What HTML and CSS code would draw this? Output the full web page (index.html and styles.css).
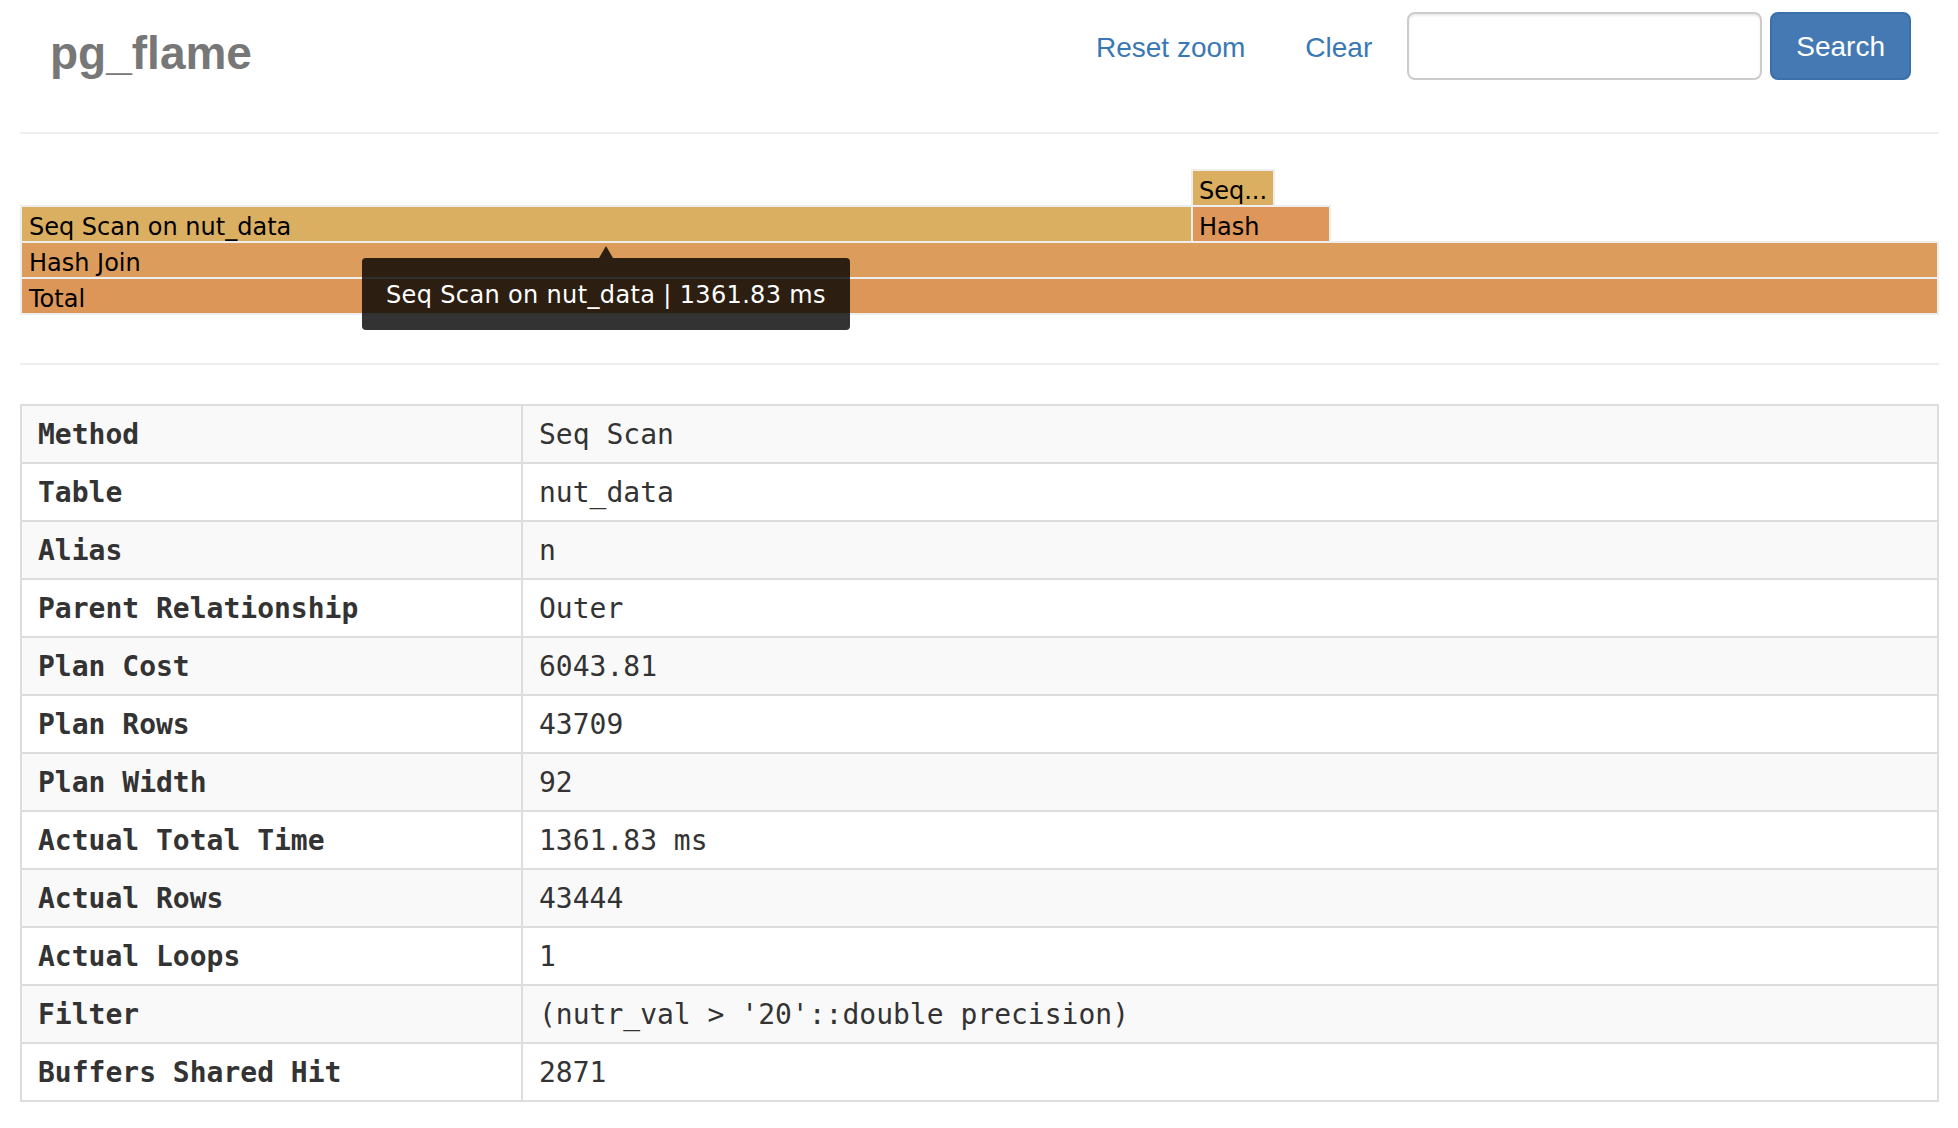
FILE: index.html
```html
<!DOCTYPE html>
<html lang="en">
<head>
<meta charset="utf-8">
<title>pg_flame</title>
<link rel="stylesheet" href="styles.css">
</head>
<body>
<div class="container">
  <header class="header">
    <div class="brand">pg_flame</div>
    <nav class="nav">
      <a class="nav-link" href="#">Reset zoom</a>
      <a class="nav-link" href="#">Clear</a>
      <form class="search">
        <input class="search-input" type="text">
        <button class="btn" type="button">Search</button>
      </form>
    </nav>
  </header>

  <section class="flame">
    <svg class="flame-svg" width="1919" height="146" viewBox="0 0 1919 146">
      <g class="frame">
        <rect x="1172" y="1" width="82" height="36" fill="#dbaf62"/>
        <text x="1179" y="30">Seq...</text>
      </g>
      <g class="frame">
        <rect x="1" y="37" width="1171" height="36" fill="#dbaf62"/>
        <text x="9" y="66">Seq Scan on nut_data</text>
      </g>
      <g class="frame">
        <rect x="1172" y="37" width="138" height="36" fill="#de965a"/>
        <text x="1179" y="66">Hash</text>
      </g>
      <g class="frame">
        <rect x="1" y="73" width="1917" height="36" fill="#dc9d5c"/>
        <text x="9" y="102">Hash Join</text>
      </g>
      <g class="frame">
        <rect x="1" y="109" width="1917" height="36" fill="#dc9658"/>
        <text x="9" y="138">Total</text>
      </g>
    </svg>
    <div class="tooltip">Seq Scan on nut_data | 1361.83 ms</div>
  </section>

  <table class="details">
    <colgroup><col class="col-key"><col></colgroup>
    <tbody>
      <tr><th>Method</th><td>Seq Scan</td></tr>
      <tr><th>Table</th><td>nut_data</td></tr>
      <tr><th>Alias</th><td>n</td></tr>
      <tr><th>Parent Relationship</th><td>Outer</td></tr>
      <tr><th>Plan Cost</th><td>6043.81</td></tr>
      <tr><th>Plan Rows</th><td>43709</td></tr>
      <tr><th>Plan Width</th><td>92</td></tr>
      <tr><th>Actual Total Time</th><td>1361.83 ms</td></tr>
      <tr><th>Actual Rows</th><td>43444</td></tr>
      <tr><th>Actual Loops</th><td>1</td></tr>
      <tr><th>Filter</th><td>(nutr_val &gt; '20'::double precision)</td></tr>
      <tr><th>Buffers Shared Hit</th><td>2871</td></tr>
    </tbody>
  </table>
</div>
</body>
</html>
```

FILE: styles.css
```css
* { box-sizing: border-box; }

html, body {
  margin: 0;
  padding: 0;
  background: #fff;
}

body {
  font-family: "Liberation Sans", Arial, Helvetica, sans-serif;
  font-size: 28px;
  color: #333;
}

.container {
  padding: 0 19px 0 20px;
}

.header {
  display: flex;
  justify-content: space-between;
  align-items: flex-start;
  height: 134px;
  border-bottom: 2px solid #eeeeee;
}

.brand {
  margin-top: 30px;
  padding-left: 30px;
  font-size: 46px;
  line-height: 46px;
  font-weight: bold;
  letter-spacing: 0;
  color: #777;
}

.nav {
  display: flex;
  align-items: center;
  padding-top: 12px;
  padding-right: 28px;
}

.nav-link {
  display: block;
  padding: 3px 30px 0;
  line-height: 40px;
  color: #3a78b5;
  text-decoration: none;
}

.search {
  display: flex;
  gap: 8px;
  margin: 0 0 0 5px;
}

.search-input {
  width: 355px;
  height: 68px;
  border: 2px solid #cccccc;
  border-radius: 8px;
  background: #fff;
  font: inherit;
  padding: 12px 24px;
  box-shadow: inset 0 2px 2px rgba(0,0,0,0.075);
}

.btn {
  height: 68px;
  padding: 2px 24px 0;
  border: 2px solid #3a6fa8;
  border-radius: 8px;
  background: #4479b4;
  color: #fff;
  font: inherit;
  line-height: 40px;
}

.flame {
  position: relative;
  margin-top: 35px;
  height: 196px;
  border-bottom: 2px solid #eeeeee;
}

.flame-svg {
  display: block;
}

.frame rect {
  stroke: #eeeeee;
  stroke-width: 2;
}

.frame text {
  font-family: "DejaVu Sans", Verdana, sans-serif;
  font-size: 24px;
  fill: #000;
}

.tooltip {
  position: absolute;
  left: 342px;
  top: 89px;
  width: 488px;
  padding: 25px 24px 23px;
  line-height: 24px;
  font-family: "DejaVu Sans", Verdana, sans-serif;
  font-size: 24px;
  letter-spacing: 0.35px;
  white-space: nowrap;
  color: #fff;
  background: rgba(0, 0, 0, 0.8);
  border-radius: 4px;
}

.tooltip::after {
  content: "";
  position: absolute;
  left: 50%;
  top: -12px;
  margin-left: -7px;
  border-left: 7px solid transparent;
  border-right: 7px solid transparent;
  border-bottom: 12px solid rgba(0, 0, 0, 0.8);
}

.details {
  width: 100%;
  margin-top: 39px;
  border-collapse: collapse;
  table-layout: fixed;
  border: 2px solid #dddddd;
  font-family: "DejaVu Sans Mono", Menlo, monospace;
  font-size: 28px;
  color: #333;
}

.col-key { width: 501px; }

.details th,
.details td {
  padding: 9px 16px 7px;
  line-height: 40px;
  text-align: left;
  border: 2px solid #dddddd;
  vertical-align: top;
}

.details th { font-weight: bold; }
.details td { font-weight: normal; }

.details tr:nth-child(odd) { background: #f9f9f9; }
```
